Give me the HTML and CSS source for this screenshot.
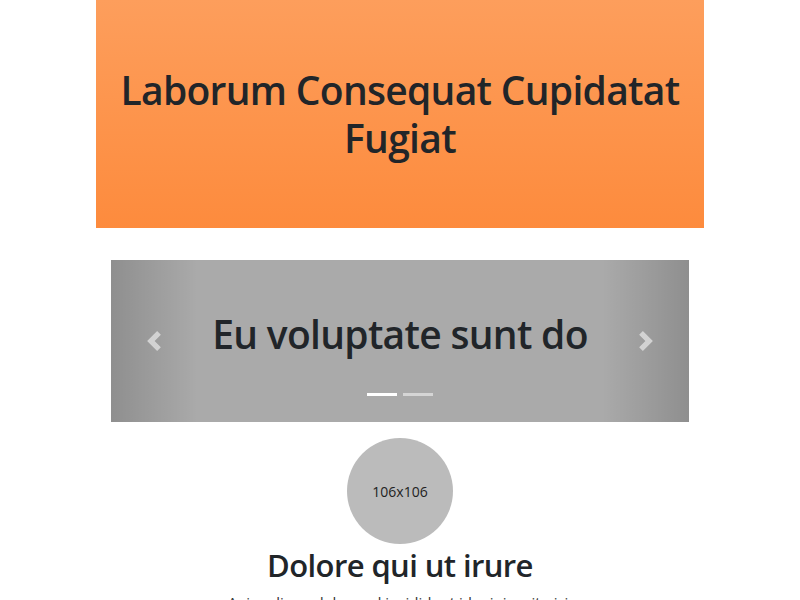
FILE: index.html
```html
<!DOCTYPE html>
<html lang="en">
<head>
<meta charset="utf-8">
<title>Laborum</title>
<link rel="stylesheet" href="styles.css">
</head>
<body>
<div class="page">
  <header class="hero">
    <h1 class="hero-title">Laborum Consequat Cupidatat Fugiat</h1>
  </header>
  <section class="carousel">
    <div class="slide">
      <h1 class="slide-title">Eu voluptate sunt do</h1>
    </div>
    <a class="control control-prev" href="#">
      <svg width="20" height="20" viewBox="0 0 8 8"><path fill="#fff" d="M5.25 0l-4 4 4 4 1.5-1.5L4.25 4l2.5-2.5L5.25 0z"/></svg>
    </a>
    <a class="control control-next" href="#">
      <svg width="20" height="20" viewBox="0 0 8 8"><path fill="#fff" d="M2.75 0l-1.5 1.5L3.75 4l-2.5 2.5L2.75 8l4-4-4-4z"/></svg>
    </a>
    <ol class="indicators">
      <li class="dot active"></li>
      <li class="dot"></li>
    </ol>
  </section>
  <section class="feature">
    <div class="avatar">106x106</div>
    <h2 class="feature-title">Dolore qui ut irure</h2>
    <p class="feature-text">Anim aliqua dolore ad incididunt id minim sit nisi.</p>
  </section>
</div>
</body>
</html>
```

FILE: styles.css
```css
html, body {
  margin: 0;
  padding: 0;
  background: #fff;
}
body {
  font-family: "Open Sans", "Noto Sans", sans-serif;
  color: #212529;
}
.page {
  width: 608px;
  margin: 0 auto;
}
.hero {
  height: 228px;
  display: flex;
  align-items: center;
  justify-content: center;
  background: linear-gradient(to bottom, #fd9e5c, #fd8b3d);
  padding: 0 15px;
  box-sizing: border-box;
}
.hero-title {
  margin: 0;
  font-size: 39px;
  font-weight: 600;
  line-height: 48px;
  text-align: center;
  letter-spacing: -0.7px;
}
.carousel {
  position: relative;
  margin: 32px 15px 0;
  height: 162px;
  background: #aaa;
  overflow: hidden;
}
.slide {
  height: 100%;
  display: flex;
  align-items: center;
  justify-content: center;
  padding-bottom: 14px;
  box-sizing: border-box;
}
.slide-title {
  margin: 0;
  font-size: 39px;
  font-weight: 600;
  line-height: 48px;
  letter-spacing: -0.7px;
}
.control {
  position: absolute;
  top: 0;
  bottom: 0;
  width: 15%;
  display: flex;
  align-items: center;
  justify-content: center;
}
.control svg { opacity: 0.55; }
.control-prev {
  left: 0;
  background: linear-gradient(to right, rgba(0,0,0,0.16), rgba(0,0,0,0));
}
.control-next {
  right: 0;
  background: linear-gradient(to left, rgba(0,0,0,0.16), rgba(0,0,0,0));
}
.indicators {
  position: absolute;
  left: 0;
  right: 0;
  bottom: 26px;
  margin: 0;
  padding: 0;
  list-style: none;
  display: flex;
  justify-content: center;
  gap: 6px;
}
.dot {
  width: 30px;
  height: 3px;
  background: #fff;
  opacity: 0.5;
}
.dot.active { opacity: 1; }
.feature {
  display: flex;
  flex-direction: column;
  align-items: center;
  padding-top: 16px;
}
.avatar {
  width: 106px;
  height: 106px;
  border-radius: 50%;
  background: #bbb;
  display: flex;
  align-items: center;
  justify-content: center;
  font-size: 14px;
  color: #222;
}
.feature-title {
  margin: 2px 0 8px;
  font-size: 31px;
  font-weight: 600;
  line-height: 38px;
  letter-spacing: -0.6px;
}
.feature-text {
  margin: 0;
  font-size: 15px;
  color: #333;
}
```
